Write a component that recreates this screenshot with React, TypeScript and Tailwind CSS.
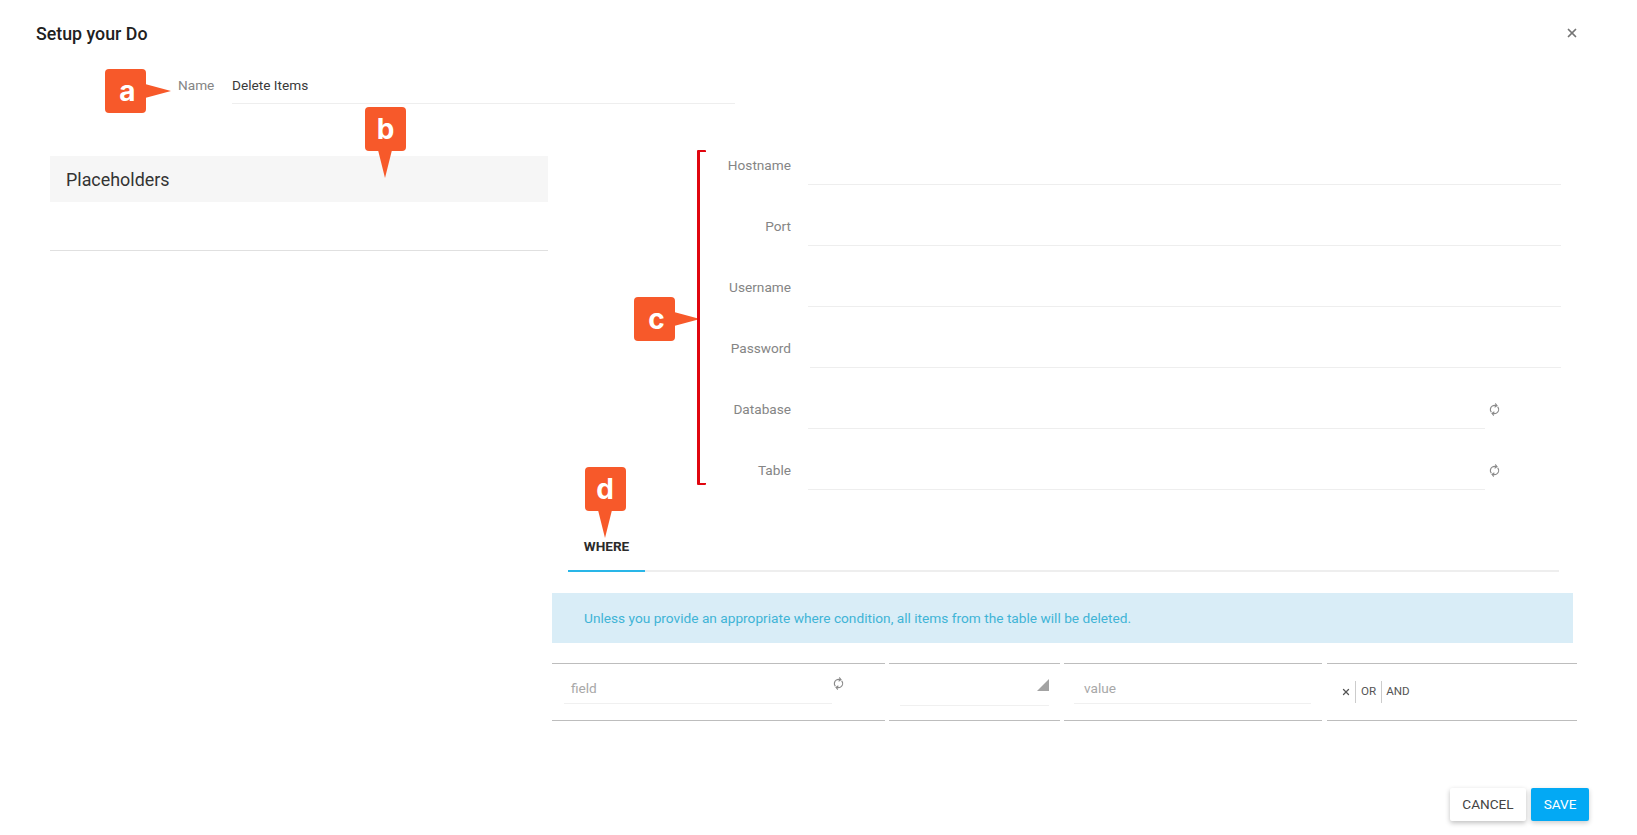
import React from "react";
import { RefreshCw, X } from "lucide-react";

const rows = [
  { label: "Hostname" },
  { label: "Port" },
  { label: "Username" },
  { label: "Password", inset: true },
  { label: "Database", sync: true },
  { label: "Table", sync: true },
];

function SyncIcon({ className }: { className?: string }) {
  return <RefreshCw size={11} strokeWidth={2.6} className={`-rotate-[35deg] ${className ?? ""}`} />;
}

// orange callout markers laid over the dialog
function Marker({ letter, tail, className, letterClass }: { letter: string; tail: "right" | "down"; className: string; letterClass?: string }) {
  return (
    <div className={`absolute h-[44px] w-[41px] rounded-[4px] bg-[#f7592a] ${className}`}>
      <span className={`flex h-full items-center justify-center pb-[1px] text-[28px] leading-none font-bold text-white [font-family:Inter,sans-serif] ${letterClass ?? ""}`}>
        {letter}
      </span>
      {tail === "right" ? (
        <svg className="absolute top-[10px] left-[40px]" width="27" height="24" viewBox="0 0 27 24">
          <polygon points="0,5 26,12 0,19" fill="#f7592a" />
        </svg>
      ) : (
        <svg className="absolute top-[43px] left-[10px]" width="20" height="28" viewBox="0 0 20 28">
          <polygon points="3,0 17,0 10,28" fill="#f7592a" />
        </svg>
      )}
    </div>
  );
}

function WhereCell({ className, children }: { className: string; children: React.ReactNode }) {
  return <div className={`h-[58px] border-y border-[#bdbdbd] ${className}`}>{children}</div>;
}

export default function App() {
  return (
    <div className="relative h-[835px] overflow-hidden bg-white text-[13.65px] [font-family:Roboto,sans-serif]">
      <header className="flex h-[67px] items-center justify-between pr-[58px] pl-[36px]">
        <h1 className="pt-[2px] text-[17.8px] font-medium text-[#212121]">Setup your Do</h1>
        <X size={14} strokeWidth={3} className="-mt-[1px] text-[#757575]" />
      </header>

      <div className="flex h-[37px] items-stretch pl-[178px]">
        <label className="w-[54px] pt-[8px] leading-[20px] text-[#858585]">Name</label>
        <div className="w-[503px] border-b border-[#eeeeee] pt-[8px] leading-[20px] text-[#3a3a3a]">Delete Items</div>
      </div>

      <main className="mt-[20px] flex gap-[4px] pl-[50px]">
        <aside className="w-[498px] pt-[32px]">
          <div className="flex h-[46px] items-center bg-[#f6f6f6] pt-[2px] pl-[16px] text-[17.9px] text-[#333333]">Placeholders</div>
          <div className="h-[49px] border-b border-[#e0e0e0]" />
        </aside>

        <section className="w-[1025px]">
          {rows.map((row) => (
            <div key={row.label} className="flex h-[61px]">
              <label className="w-[239px] pt-[31px] text-right leading-[20px] text-[#858585]">{row.label}</label>
              <div className="ml-[17px] flex flex-1 pr-[16px]">
                <div className={`flex-1 border-b border-[#eeeeee] ${row.sync ? "mr-[76px]" : ""} ${row.inset ? "ml-[2px]" : ""}`} />
                {row.sync && <SyncIcon className="absolute mt-[36px] ml-[681px] text-[#8a8a8a]" />}
              </div>
            </div>
          ))}

          <div className="mr-[18px] ml-[16px] flex h-[82px] items-end border-b-2 border-[#eeeeee]">
            <div className="-mb-[2px] flex h-[35px] w-[77px] items-start justify-center border-b-2 border-[#29b6e8] text-[13.6px] leading-[18px] font-bold text-[#2b2b2b]">
              WHERE
            </div>
          </div>

          <div className="mt-[21px] mr-[4px] flex h-[50px] items-center bg-[#d9edf7] pl-[32px] text-[13.7px] text-[#3fb4d6]">
            Unless you provide an appropriate where condition, all items from the table will be deleted.
          </div>

          <div className="mt-[20px] flex gap-[4px]">
            <WhereCell className="flex w-[333px] pt-[8px] pr-[13px] pl-[12px]">
              <div className="h-[32px] w-[268px] border-b border-[#f0f0f0] pt-[6px] pl-[7px] leading-[20px] text-[#a8a8a8]">field</div>
              <SyncIcon className="mt-[6px] ml-[1px] text-[#8a8a8a]" />
            </WhereCell>
            <WhereCell className="w-[171px] pt-[10px] pr-[11px] pl-[11px]">
              <div className="flex h-[32px] items-start justify-end border-b border-[#f0f0f0] pt-[5px]">
                <svg width="12" height="12" viewBox="0 0 12 12">
                  <polygon points="12,0 12,12 0,12" fill="#a3a3a3" />
                </svg>
              </div>
            </WhereCell>
            <WhereCell className="w-[258px] pt-[8px] pr-[11px] pl-[10px]">
              <div className="h-[32px] border-b border-[#f0f0f0] pt-[6px] pl-[10px] leading-[20px] text-[#a8a8a8]">value</div>
            </WhereCell>
            <WhereCell className="ml-[1px] flex w-[250px] items-center pl-[14px] text-[11.6px] text-[#555555]">
              <X size={10} strokeWidth={3} className="mr-[4px] text-[#555555]" />
              <span className="flex h-[22px] items-center border-l border-[#cccccc] px-[5px]">OR</span>
              <span className="flex h-[22px] items-center border-l border-[#cccccc] pr-[5px] pl-[4px]">AND</span>
            </WhereCell>
          </div>
        </section>
      </main>

      <footer className="mt-[67px] flex justify-end gap-[5px] pr-[48px]">
        <button className="h-[33px] w-[76px] rounded-[2px] bg-white text-[13.6px] text-[#444444] shadow-[0_2px_5px_rgba(0,0,0,0.25)]">CANCEL</button>
        <button className="h-[33px] w-[58px] rounded-[2px] bg-[#03a9f4] text-[13.6px] text-white shadow-[0_2px_5px_rgba(0,0,0,0.2)]">SAVE</button>
      </footer>

      <Marker letter="a" tail="right" className="top-[69px] left-[105px]" letterClass="pl-[4px]" />
      <Marker letter="b" tail="down" className="top-[107px] left-[365px]" />
      <Marker letter="c" tail="right" className="top-[297px] left-[634px]" letterClass="pl-[4px]" />
      <Marker letter="d" tail="down" className="top-[467px] left-[585px]" letterClass="pr-[1px]" />
      <div className="absolute top-[150px] left-[697px] h-[335px] w-[9px] rounded-[1px] border-y-2 border-l-[3px] border-[#e0060f]" />
    </div>
  );
}
